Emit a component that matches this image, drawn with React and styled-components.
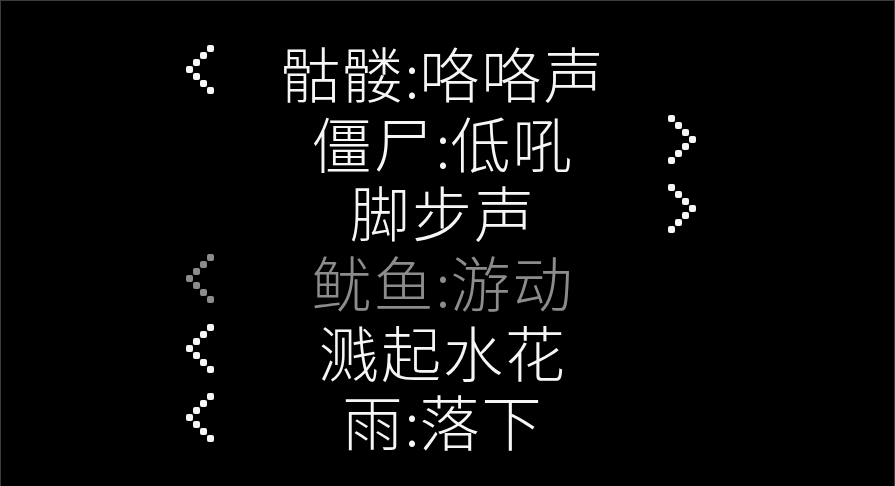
import React from "react";
import styled, { createGlobalStyle } from "styled-components";

const GlobalStyle = createGlobalStyle`
  html, body {
    margin: 0;
    padding: 0;
    background: #000;
  }
  #root {
    width: 895px;
    height: 486px;
    overflow: hidden;
  }
`;

const Screen = styled.div`
  box-sizing: border-box;
  width: 895px;
  height: 486px;
  background: #000;
  border: 1px solid #3c3c3c;
  border-bottom: none;
  padding: 34px 0 0 185px;
  font-family: "Noto Sans CJK SC", "Noto Sans", sans-serif;
`;

const SubtitleList = styled.div`
  width: 510px;
  display: flex;
  flex-direction: column;
`;

const Line = styled.div`
  height: 69.6px;
  display: grid;
  grid-template-columns: 28px 1fr 28px;
  align-items: center;
  color: ${(p) => (p.$dim ? "#8c8c8c" : "#f6f6f6")};
`;

const Caption = styled.div`
  text-align: center;
  font-size: 60px;
  line-height: 60px;
  height: 60px;
  letter-spacing: 2px;
  font-weight: 300;
  white-space: nowrap;
  padding-top: 5px;
  padding-left: 4px;
`;

const Colon = styled.span`
  letter-spacing: 0;
`;

const ArrowSlot = styled.div`
  width: 28px;
  height: 49px;
  display: flex;
`;

// Blocky bitmap-font chevron: a 4x7 grid of soft square pixels
const LEFT_PIXELS = [
  [3, 0],
  [2, 1],
  [1, 2],
  [0, 3],
  [1, 4],
  [2, 5],
  [3, 6],
];

function Chevron({ dir }) {
  const pixels = dir === "right" ? LEFT_PIXELS.map(([x, y]) => [3 - x, y]) : LEFT_PIXELS;
  return (
    <svg width="28" height="49" viewBox="0 0 4 7" fill="currentColor">
      {pixels.map(([x, y]) => (
        <rect key={`${x}-${y}`} x={x} y={y} width="1" height="1" rx="0.28" />
      ))}
    </svg>
  );
}

const subtitles = [
  { text: "骷髅:咯咯声", left: true },
  { text: "僵尸:低吼", right: true },
  { text: "脚步声", right: true },
  { text: "鱿鱼:游动", left: true, dim: true },
  { text: "溅起水花", left: true },
  { text: "雨:落下", left: true },
];

function renderText(text) {
  const parts = text.split(":");
  return parts.map((part, i) => (
    <React.Fragment key={i}>
      {i > 0 && <Colon>:</Colon>}
      {part}
    </React.Fragment>
  ));
}

export default function App() {
  return (
    <>
      <GlobalStyle />
      <Screen>
        <SubtitleList>
          {subtitles.map((s) => (
            <Line key={s.text} $dim={s.dim}>
              <ArrowSlot>{s.left && <Chevron dir="left" />}</ArrowSlot>
              <Caption>{renderText(s.text)}</Caption>
              <ArrowSlot>{s.right && <Chevron dir="right" />}</ArrowSlot>
            </Line>
          ))}
        </SubtitleList>
      </Screen>
    </>
  );
}
